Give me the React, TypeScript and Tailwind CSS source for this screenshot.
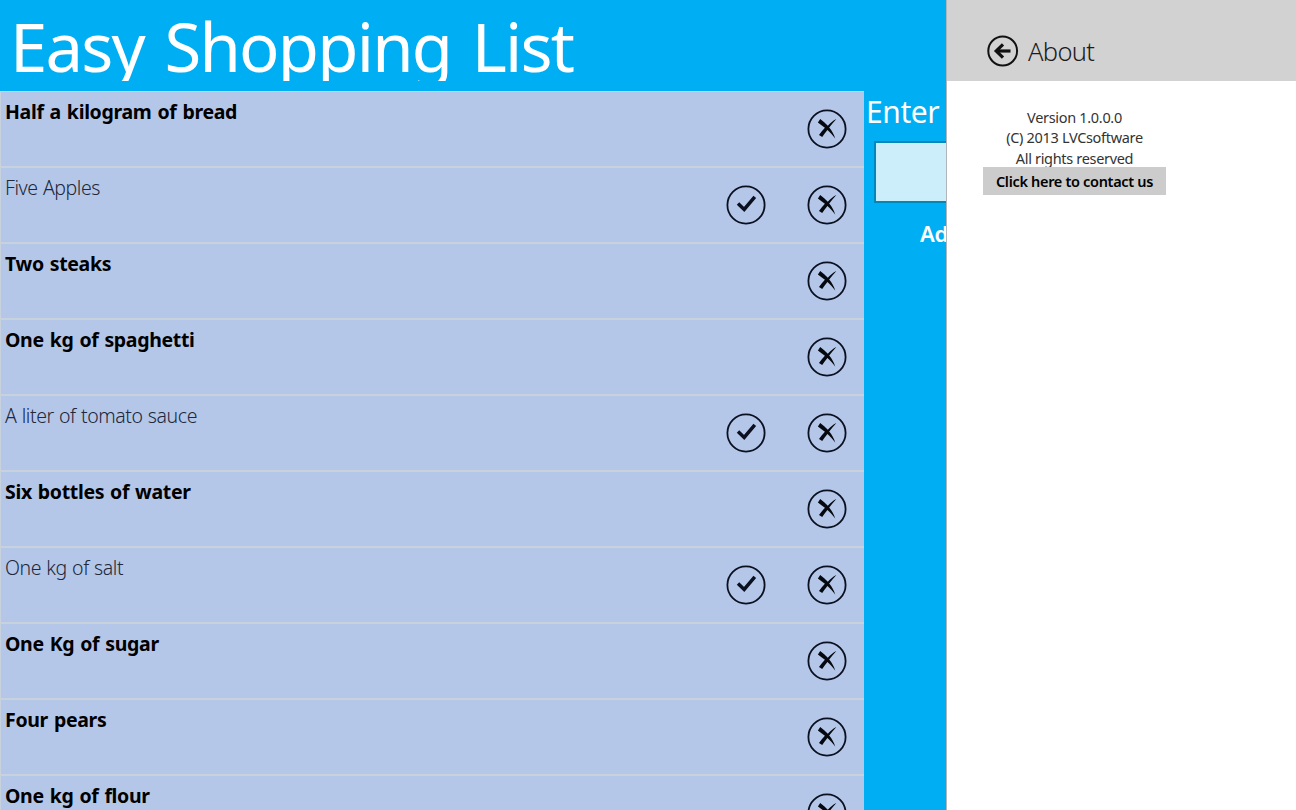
type Item = {
  text: string;
  open: boolean;
};

const items: Item[] = [
  { text: "Half a kilogram of bread", open: false },
  { text: "Five Apples", open: true },
  { text: "Two steaks", open: false },
  { text: "One kg of spaghetti", open: false },
  { text: "A liter of tomato sauce", open: true },
  { text: "Six bottles of water", open: false },
  { text: "One kg of salt", open: true },
  { text: "One Kg of sugar", open: false },
  { text: "Four pears", open: false },
  { text: "One kg of flour", open: false },
];

const CheckButton = () => (
  <button aria-label="Done" className="h-10 w-10">
    <svg viewBox="0 0 40 40" className="h-10 w-10" fill="none" stroke="#0b1020">
      <circle cx="20" cy="20" r="18.6" strokeWidth="1.8" />
      <path d="M12 18.4 L18.2 24.4 L28.8 11.8" strokeWidth="3.5" />
    </svg>
  </button>
);

const RemoveButton = () => (
  <button aria-label="Remove" className="h-10 w-10">
    <svg viewBox="0 0 40 40" className="h-10 w-10">
      <circle cx="20" cy="20" r="18.6" strokeWidth="1.8" fill="none" stroke="#0b1020" />
      <path
        d="M13.2 10 C16 12.2 18.6 14.5 20.8 16.8 C23.4 14.1 26 11.6 29.4 10 C26.8 12.9 24.4 15.6 22.2 18.6 C24.7 21.6 26.9 25 28.2 29.4 C25.5 26 23 23.2 20.4 21 C18.6 23.2 16.7 25.6 15.2 28.1 L12 26 C13.8 23.4 15.8 21 17.9 18.7 C15.7 16.9 13.3 15.2 10.9 13.4 Z"
        fill="#05080f"
      />
    </svg>
  </button>
);

const ShoppingList = () => (
  <ul className="w-[864px] shrink-0">
    {items.map(({ text, open }) => (
      <li
        key={text}
        className="flex h-[76px] justify-between border border-r-0 border-[#c8d2dd] bg-[#b5c7e9] pl-1 text-[19.5px] leading-7"
      >
        <span
          className={`pt-[6px] whitespace-nowrap ${
            open
              ? "font-light tracking-[-0.42px] text-[#20283a] [word-spacing:0.6px]"
              : "font-bold tracking-[-0.33px] text-black [word-spacing:1.2px]"
          }`}
        >
          {text}
        </span>
        <div className="flex items-center gap-[41px] pr-[17px]">
          {open && <CheckButton />}
          <RemoveButton />
        </div>
      </li>
    ))}
  </ul>
);

const AddPanel = () => (
  <div className="min-w-0 flex-1 overflow-hidden text-white">
    <div className="pl-[2px] text-[30px] leading-[42px] tracking-[-0.4px] whitespace-nowrap">
      Enter
    </div>
    <div className="mt-[8px] ml-[10px] h-[62px] w-[200px] border-2 border-[#0288b8] bg-[#cceefb]" />
    <div className="mt-[14px] ml-[56px] text-[22px] leading-8 font-semibold tracking-[-0.3px] whitespace-nowrap">
      Add
    </div>
  </div>
);

const AboutFlyout = () => (
  <aside className="flex w-[350px] shrink-0 flex-col border-l border-[#b0b6ba] bg-white">
    <header className="flex h-[81px] items-center bg-[#d2d2d2] pt-[21px] pl-10">
      <svg viewBox="0 0 32 32" className="h-8 w-8" fill="none" stroke="#111">
        <circle cx="15.7" cy="16" r="14.4" strokeWidth="2" />
        <path d="M9.2 16 H23.5" strokeWidth="3.2" />
        <path d="M16 9.4 L9.2 16 L16 22.6" strokeWidth="3.2" />
      </svg>
      <h2 className="ml-[9px] text-[25.5px] leading-9 font-[350] tracking-[-0.7px] text-[#1c1c1c]">
        About
      </h2>
    </header>
    <div className="ml-9 flex w-[183px] flex-col items-center pt-[26px] text-[14.5px] leading-[20.3px] tracking-[-0.32px] text-[#333]">
      <p>Version 1.0.0.0</p>
      <p>(C) 2013 LVCsoftware</p>
      <p>All rights reserved</p>
      <button className="-mt-px h-7 w-full bg-[#cccccc] font-semibold whitespace-nowrap text-black">
        Click here to contact us
      </button>
    </div>
  </aside>
);

export default function App() {
  return (
    <div className="flex h-[810px] w-[1296px] overflow-hidden bg-[#00aef3] font-['Noto_Sans','Open_Sans',sans-serif]">
      <div className="flex min-w-0 flex-1 flex-col">
        <header className="mb-[10px] h-[81px] shrink-0 overflow-hidden pl-[10px]">
          <h1 className="text-[67px] leading-[92px] tracking-[-1.8px] whitespace-nowrap text-white [word-spacing:5px]">
            Easy Shopping List
          </h1>
        </header>
        <div className="flex min-h-0 flex-1 overflow-hidden">
          <ShoppingList />
          <AddPanel />
        </div>
      </div>
      <AboutFlyout />
    </div>
  );
}
